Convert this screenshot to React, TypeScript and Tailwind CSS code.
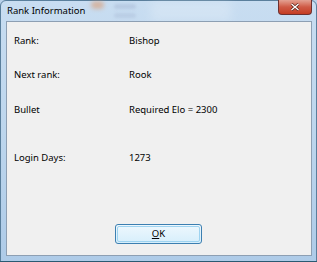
import React from "react";

export default function App() {
  return (
    <div className="w-[317px] h-[262px] relative overflow-hidden bg-[#b9d1ea]" style={{ fontFamily: '"Noto Sans", "Liberation Sans", sans-serif' }}>
      {/* frame */}
      <div className="absolute inset-0 rounded-t-[6px] border border-[#5a7f9c] bg-gradient-to-b from-[#c8ddf1] via-[#bdd6ed] to-[#aecbe8]">
        {/* blurred background blobs in title */}
        <div className="absolute left-[90px] top-0 w-[13px] h-[8px] rounded-full bg-[#e0905a] opacity-50 blur-[2px]" />
        <div className="absolute left-[113px] top-[3px] w-[22px] h-[5px] rounded bg-[#a7b8d4] opacity-50 blur-[1.5px]" />
        <div className="absolute left-[113px] top-[12px] w-[22px] h-[5px] rounded bg-[#a7b8d4] opacity-40 blur-[1.5px]" />
        <div className="absolute left-[150px] top-0 w-[80px] h-[20px] bg-white opacity-20 blur-[4px]" />
      </div>
      {/* title */}
      <div className="absolute left-[7px] top-[4px] text-[9.5px] leading-[14px] text-black">Rank Information</div>
      {/* close button */}
      <div className="absolute left-[278px] top-0 w-[34px] h-[15px] rounded-b-[4px] border border-t-0 border-[#6d3030] bg-gradient-to-b from-[#e3a192] via-[#cf5a45] to-[#c43c22] flex items-center justify-center">
        <svg width="10" height="8" viewBox="0 0 10 8">
          <path d="M1.5 1 L8.5 7 M8.5 1 L1.5 7" stroke="#5a2016" strokeWidth="2.8" />
          <path d="M1.5 1 L8.5 7 M8.5 1 L1.5 7" stroke="#ffffff" strokeWidth="1.4" />
        </svg>
      </div>
      {/* client area */}
      <div className="absolute left-[6px] top-[21px] w-[306px] h-[235px] border border-[#8d9fb3] bg-[#f0f0f0] text-[9.5px] text-black">
        <div className="flex flex-col pl-[7px] pt-[11px]">
          <div className="flex h-[16px] items-center">
            <span className="w-[115px]">Rank:</span>
            <span>Bishop</span>
          </div>
          <div className="flex h-[16px] items-center mt-[18px]">
            <span className="w-[115px]">Next rank:</span>
            <span>Rook</span>
          </div>
          <div className="flex h-[16px] items-center mt-[19px]">
            <span className="w-[115px]">Bullet</span>
            <span>Required Elo = 2300</span>
          </div>
          <div className="flex h-[16px] items-center mt-[32px]">
            <span className="w-[115px]">Login Days:</span>
            <span>1273</span>
          </div>
        </div>
        <div className="absolute left-[108px] top-[202px] w-[87px] h-[20px] rounded-[3px] border border-[#3c7fb1] bg-gradient-to-b from-[#eef7fd] to-[#d6eefb] p-[1px]">
          <div className="w-full h-full rounded-[2px] border border-[#9ed3f0] flex items-center justify-center leading-none">
            <span><span className="underline underline-offset-1">O</span>K</span>
          </div>
        </div>
      </div>
      {/* bottom dark line */}
      <div className="absolute left-0 right-0 bottom-0 h-[1px] bg-[#2a5a72]" />
    </div>
  );
}
